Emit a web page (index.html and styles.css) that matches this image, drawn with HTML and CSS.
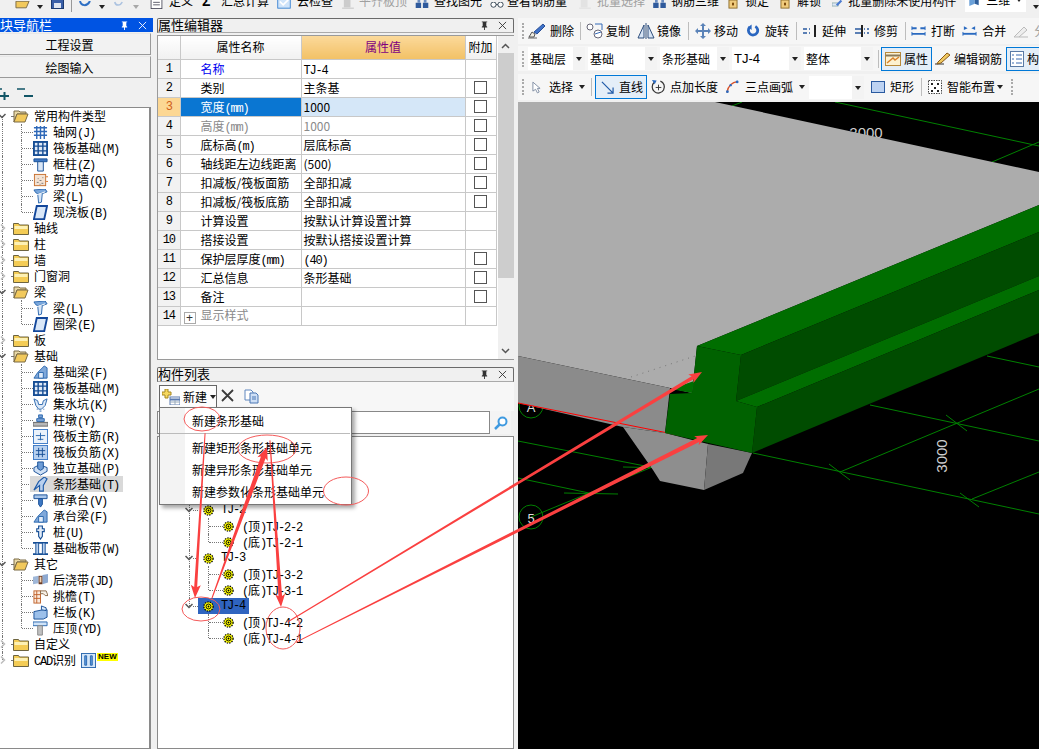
FILE: index.html
```html
<!DOCTYPE html>
<html lang="zh-CN">
<head>
<meta charset="utf-8">
<title>属性编辑器</title>
<link rel="stylesheet" href="styles.css">
</head>
<body>
<svg class="sprite" xmlns="http://www.w3.org/2000/svg">
<symbol id="folderopen" viewBox="0 0 16 14"><path d="M1 2h5l1 1h6v2H4L1 13z" fill="#e9d9a8" stroke="#7a6a45"/><path d="M1 13l3-8h11l-3 8z" fill="#f2c95c" stroke="#7a6a45"/></symbol>
<symbol id="folder" viewBox="0 0 16 14"><path d="M.5 2.500h5l1 1.500h9v9.500H.5z" fill="#f4cc55" stroke="#6d6440"/><path d="M1.500 5h13v3h-13z" fill="#fdf1b4"/></symbol>
<symbol id="grid" viewBox="0 0 16 16"><path d="M1 3h14M1 7h14M1 11h14M4 1v14M8 1v14M12 1v14" stroke="#2d68b8" stroke-width="1.500" fill="none"/></symbol>
<symbol id="raft" viewBox="0 0 16 16"><rect x="1" y="1" width="14" height="14" fill="#dfe9f7" stroke="#164d94" stroke-width="2"/><path d="M5.500 1v14M10.500 1v14M1 5.500h14M1 10.500h14" stroke="#164d94" stroke-width="1.500"/></symbol>
<symbol id="col" viewBox="0 0 16 16"><path d="M1 2h14v3H1z" fill="#3e78c4" stroke="#174f96"/><path d="M5 5h6v10H5z" fill="#d9e6f6" stroke="#174f96"/></symbol>
<symbol id="wall" viewBox="0 0 16 16"><rect x="1.500" y="1.500" width="12" height="12" fill="#f4e2d2" stroke="#c66f2e"/><path d="M4 10h2M7 8h2M9 11h2M5 6h1M10 5h1M7 12h1" stroke="#777"/><path d="M14 4h2M14 9h2" stroke="#d86b1f"/></symbol>
<symbol id="beam" viewBox="0 0 16 16"><path d="M1 1l12-1 2 3-8 3-4-2z" fill="#79a7dc" stroke="#2a66ae"/><path d="M5 5l5-1-1 10-3 1z" fill="#d8e6f7" stroke="#2a66ae"/><path d="M4 6l9-3" stroke="#fff"/></symbol>
<symbol id="slab" viewBox="0 0 16 16"><path d="M4 1h11l-3 14H1z" fill="#d9e7f8" stroke="#13479b" stroke-width="2"/></symbol>
<symbol id="fbeam" viewBox="0 0 16 16"><path d="M1 14l4-6 7-7 3 2v11z" fill="#7fa8da" stroke="#2a66ae"/><path d="M6 8h5v6H6z" fill="#e1ecf9" stroke="#2a66ae"/></symbol>
<symbol id="pit" viewBox="0 0 16 16"><path d="M1 2l4 2 1 4h4l1-4 4-2-2 7-4 4H6L3 9z" fill="#dce8f7" stroke="#2a66ae"/><path d="M4 13h1M7 15h2M11 13h1" stroke="#2a66ae"/></symbol>
<symbol id="pier" viewBox="0 0 16 16"><path d="M6 2h4v3H6zM4 6h8v3H4z" fill="#7ba3d8" stroke="#2a66ae"/><rect x="0" y="10" width="16" height="4" fill="#b8b8b8" stroke="#666"/></symbol>
<symbol id="rmain" viewBox="0 0 16 16"><rect x=".5" y=".5" width="15" height="15" fill="#eaf2fb" stroke="#3b79c6"/><path d="M3 7h10M8 4v8M5 11h6" stroke="#2a66ae" fill="none"/></symbol>
<symbol id="rneg" viewBox="0 0 16 16"><rect x=".5" y=".5" width="15" height="15" fill="#b7d0ef" stroke="#3b79c6"/><path d="M3 6h10M3 10h10M6 3v10M10 3v10" stroke="#174f96" fill="none"/></symbol>
<symbol id="iso" viewBox="0 0 16 16"><path d="M1 7l6-3 8 3v4l-7 4-7-4z" fill="#cfe0f5" stroke="#174f96"/><path d="M5 1h6v7l-3 2-3-2z" fill="#6d9cd6" stroke="#174f96"/></symbol>
<symbol id="strip" viewBox="0 0 16 16"><path d="M1 14l5-9 6-5 3 2-4 7v6H7V9z" fill="#b9d0ee" stroke="#1e5aa8" stroke-width="1.200"/></symbol>
<symbol id="cap" viewBox="0 0 16 16"><path d="M1 2h14v4H1z" fill="#a9c6ea" stroke="#174f96"/><path d="M6 6h4v6L8 15l-2-3z" fill="#3e78c4" stroke="#174f96"/></symbol>
<symbol id="pile" viewBox="0 0 16 16"><path d="M6 1h4v3h2v3h-2v5l-2 3-2-3V7H4V4h2z" fill="#e0ebf8" stroke="#174f96" stroke-width="1.200"/></symbol>
<symbol id="band" viewBox="0 0 16 16"><path d="M0 2h16M0 14h16" stroke="#174f96" stroke-width="2"/><path d="M3 2h3v12H3zM10 2h3v12h-3z" fill="#b7d0ef" stroke="#174f96"/></symbol>
<symbol id="post" viewBox="0 0 16 16"><path d="M0 4l6-1v8l-6 1z" fill="#9fb7d8"/><path d="M10 2l6-1v9l-6 2z" fill="#8ea9d0"/><path d="M6 3h4v9H6z" fill="#6b3a22"/><path d="M7 4h2v6H7z" fill="#f2d6b8"/></symbol>
<symbol id="eave" viewBox="0 0 16 16"><rect x="1" y="2" width="7" height="13" fill="#fbe9db" stroke="#c0622b"/><path d="M1 6h7M1 10h7M4 2v13" stroke="#c0622b"/><path d="M8 2l6 0 2 5-3 0-2-2H8z" fill="#f6f1e8" stroke="#8a6a4a"/></symbol>
<symbol id="rail" viewBox="0 0 16 16"><path d="M1 7l10-2h4v8l-4 2H1z" fill="#9cc0ea" stroke="#174f96"/><path d="M9 1l5 2v3l-5-1z" fill="#dceaf9" stroke="#174f96"/></symbol>
<symbol id="coping" viewBox="0 0 16 16"><path d="M0 1h15v4H0z" fill="#cfe3f8" stroke="#2a66ae"/><path d="M5 5h5v10H5z" fill="#c0c0c0" stroke="#888"/></symbol>
<symbol id="cad" viewBox="0 0 16 16"><rect x=".5" y=".5" width="15" height="15" fill="#d4e6f9" stroke="#2a66ae"/><path d="M4 3h2v10H4zM10 3h2v10h-2z" fill="#5d9ae0" stroke="#2a66ae"/></symbol>
<symbol id="gear" viewBox="0 0 12 12"><circle cx="6" cy="6" r="5" fill="#ff0" stroke="#000" stroke-width="1.400" stroke-dasharray="1.500 1.200"/><circle cx="6" cy="6" r="2.700" fill="#ff0" stroke="#000"/><circle cx="6" cy="6" r="1" fill="#000"/></symbol>
<symbol id="pin" viewBox="0 0 10 10"><path d="M2 .5h6v.8H7v4.200l1 1v.8H5.500V10h-1V7.300H2v-.8l1-1V1.300H2z" fill="currentColor"/></symbol>
<symbol id="x" viewBox="0 0 10 10"><path d="M1 1l8 8M9 1L1 9" stroke="currentColor" fill="none"/></symbol>
<symbol id="del" viewBox="0 0 18 16"><path d="M0 15h9" stroke="#666"/><path d="M1 14l3-5 3 2-1 3z" fill="#f0ede2" stroke="#555"/><path d="M6 9l9-8 2 2-8 8z" fill="#3f72c8" stroke="#2a4f96"/></symbol>
<symbol id="copy" viewBox="0 0 18 16"><circle cx="4" cy="4" r="3" fill="#fff" stroke="#667"/><circle cx="12" cy="11" r="4" fill="#fff" stroke="#667"/><path d="M9 11l6-2M9 1h7v6" stroke="#356ab8" fill="none"/></symbol>
<symbol id="mirror" viewBox="0 0 18 16"><path d="M7 2v13H1zM11 2v13h6z" fill="#d8e5f6" stroke="#2f4f7d"/><path d="M9 0v16" stroke="#2f4f7d"/></symbol>
<symbol id="move" viewBox="0 0 16 16"><path d="M8 0l3 3H9v4h4V5l3 3-3 3V9H9v4h2l-3 3-3-3h2V9H3v2L0 8l3-3v2h4V3H5z" fill="#5b83b8"/></symbol>
<symbol id="rotate" viewBox="0 0 14 14"><path d="M3 2.800A5 5 0 1 0 9 2" fill="none" stroke="#2a66c0" stroke-width="3"/><path d="M5 0v6L1 3z" fill="#2a66c0"/></symbol>
<symbol id="extend" viewBox="0 0 14 14"><path d="M0 5h4M0 9h4M6 5h1M6 9h1" stroke="#2a5aa0" stroke-width="1.500"/><path d="M12 1v12" stroke="#222" stroke-width="2"/></symbol>
<symbol id="trim" viewBox="0 0 14 14"><path d="M0 5h6M0 9h6M9 5h1M9 9h1M12 5h2M12 9h2" stroke="#2a5aa0" stroke-width="1.500"/><path d="M7 1v12" stroke="#222" stroke-width="2"/></symbol>
<symbol id="brk" viewBox="0 0 16 14"><path d="M1 4h5M10 4h5M1 10h14" stroke="#2a6ac0" stroke-width="2"/><path d="M1 2v4M15 2v4M1 8v4M15 8v4" stroke="#2a6ac0"/></symbol>
<symbol id="merge" viewBox="0 0 16 14"><path d="M2 2l4 2-4 2zM14 2l-4 2 4 2z" fill="#2a6ac0"/><path d="M1 10h14" stroke="#2a6ac0" stroke-width="2"/><path d="M1 8v4M15 8v4" stroke="#2a6ac0"/></symbol>
<symbol id="fen" viewBox="0 0 16 14"><path d="M1 13h14M1 13L11 3l3 3-8 7" fill="#eee" stroke="#bbb"/></symbol>
<symbol id="prop" viewBox="0 0 16 16"><rect x=".5" y="1.500" width="15" height="13" fill="#fdf1d0" stroke="#b98a3a"/><path d="M.5 4.500h15" stroke="#8a7a5a" stroke-width="2"/><path d="M2 12l6-5 2 2 4-3" stroke="#d9832b" stroke-width="1.500" fill="none"/></symbol>
<symbol id="edit" viewBox="0 0 16 14"><path d="M0 12h9" stroke="#333"/><path d="M3 10l9-9 3 2-9 8-4 1z" fill="#f0c860" stroke="#8a5a1a"/></symbol>
<symbol id="comp" viewBox="0 0 14 16"><rect x=".5" y=".5" width="13" height="15" fill="#fff" stroke="#5a7aa5"/><path d="M2 4h2M2 8h2M2 12h2M6 4h6M6 8h6M6 12h6" stroke="#3a6ab0"/></symbol>
<symbol id="cursor" viewBox="0 0 10 14"><path d="M1 1v10l3-2 2 4 2-1-2-4h3z" fill="#fff" stroke="#7c8aa0"/></symbol>
<symbol id="line" viewBox="0 0 14 14"><path d="M1 1l12 12M13 7v6H7" stroke="#1f5aa8" stroke-width="1.300" fill="none"/></symbol>
<symbol id="ptlen" viewBox="0 0 16 16"><path d="M3.500 3A6.500 6.500 0 1 0 10 1.800" fill="none" stroke="#333" stroke-width="1.300"/><path d="M5 8.500h6M8 5.500v6" stroke="#333"/><path d="M1 .5l5 .5-2 4z" fill="#2a6ac0"/></symbol>
<symbol id="arc" viewBox="0 0 14 14"><path d="M1 13C2 6 6 2 13 1" fill="none" stroke="#d9532b" stroke-width="1.500"/><circle cx="1.500" cy="12" r="1.500" fill="#2a6ac0"/><circle cx="12" cy="1.500" r="1.500" fill="#2a6ac0"/><circle cx="5" cy="5" r="1.300" fill="#2a6ac0"/></symbol>
<symbol id="rect" viewBox="0 0 14 12"><rect x=".5" y=".5" width="13" height="11" fill="#bcd2f2" stroke="#2a5aa0"/></symbol>
<symbol id="smart" viewBox="0 0 14 14"><rect x=".5" y=".5" width="13" height="13" fill="#fff" stroke="#444" stroke-dasharray="1.500 1"/><path d="M3 4h2M9 4h2M6 8h2M3 11h2M9 11h2" stroke="#222" stroke-width="2"/></symbol>
<symbol id="define" viewBox="0 0 14 12"><rect x=".5" y=".5" width="13" height="11" fill="#fff" stroke="#445"/><path d="M3 4h8M3 7h8" stroke="#445"/></symbol>
<symbol id="check" viewBox="0 0 16 12"><rect x=".5" y="-3" width="15" height="14" fill="#cfe4fa" stroke="#2a7ad0"/><path d="M3 3l4 4 6-6" stroke="#fff" stroke-width="2" fill="none"/></symbol>
<symbol id="align" viewBox="0 0 14 12"><rect x="2" y="0" width="8" height="10" fill="#ccc"/><path d="M0 11h14" stroke="#bbb"/></symbol>
<symbol id="find" viewBox="0 0 14 10"><path d="M0 3h6v6H0zM8 3h6v6H8z" fill="#2f5a9c"/><path d="M2 0h3v3H2zM9 0h3v3H9z" fill="#6a8cc0"/></symbol>
<symbol id="glass" viewBox="0 0 16 8"><circle cx="4" cy="3" r="3" fill="#fff" stroke="#234"/><circle cx="12" cy="3" r="3" fill="#fff" stroke="#234"/><path d="M7 3h2" stroke="#234"/></symbol>
<symbol id="lock" viewBox="0 0 10 10"><rect x=".5" y="0" width="9" height="9" fill="#f0cb7c" stroke="#8a6a2a"/><rect x="4" y="3" width="2" height="3" fill="#703d00"/></symbol>
<symbol id="bulk" viewBox="0 0 14 10"><path d="M0 7h8V3H0z" fill="#dfe8f7" stroke="#8aa"/><path d="M5 5l6-6 2 2-6 6z" fill="#4a7ad0"/></symbol>
<symbol id="cube" viewBox="0 0 12 14"><path d="M0 3l7-3v11l-7 3z" fill="#6aa0d8"/><path d="M7 0l5 2v11l-5-2z" fill="#2f5f9c"/></symbol>
<symbol id="floppy" viewBox="0 0 13 10"><rect x=".5" y="-3" width="12" height="12.500" fill="#3a5fa8" stroke="#1c3a70"/><rect x="3" y="4" width="7" height="5" fill="#dfe5f0"/></symbol>
<symbol id="ofolder" viewBox="0 0 16 8"><path d="M1 0h14l-3 7H1z" fill="#f2c95c" stroke="#7a6a45"/></symbol>
<symbol id="undo" viewBox="0 0 12 8"><path d="M1 0c1 5 7 6 10 0" fill="none" stroke="#2e6fc4" stroke-width="2"/></symbol>
<symbol id="newic" viewBox="0 0 18 16"><path d="M3 0h3v3h3v3H6v3H3V6H0V3h3z" fill="#f6d860" stroke="#a58620"/><rect x="8" y="8" width="10" height="8" fill="#fff" stroke="#5a7ab0"/><path d="M8 10.500h10" stroke="#5a7ab0" stroke-width="2"/><path d="M8 13h10M13 11v5" stroke="#9ab"/></symbol>
<symbol id="xlarge" viewBox="0 0 13 13"><path d="M1 1l11 11M12 1L1 12" stroke="#3c3c3c" stroke-width="1.800"/></symbol>
<symbol id="dup" viewBox="0 0 15 15"><path d="M1 1h6l2 2v8H1z" fill="#fff" stroke="#5f86be"/><path d="M6 4h6l2 2v8H6z" fill="#cfe0f6" stroke="#4a76b4"/><path d="M8 8h4M8 10h4" stroke="#4a76b4"/></symbol>
<symbol id="search" viewBox="0 0 14 14"><circle cx="8.500" cy="5.500" r="4" fill="#fff" stroke="#3f9ae0" stroke-width="2"/><path d="M5.500 8.500L1 13" stroke="#3f9ae0" stroke-width="2.500"/></symbol>
<symbol id="expandall" viewBox="0 0 14 12"><path d="M0 1h6" stroke="#156" stroke-width="1.500"/><path d="M4 8h9M8.500 4v8" stroke="#156" stroke-width="2"/></symbol>
<symbol id="collapseall" viewBox="0 0 16 12"><path d="M0 2h8" stroke="#156" stroke-width="1.500"/><path d="M7 9h9" stroke="#156" stroke-width="2"/></symbol>
<symbol id="chev" viewBox="0 0 8 6"><path d="M.5 1L4 4.500 7.500 1" fill="none" stroke="#555" stroke-width="1.500"/></symbol>
<symbol id="chevr" viewBox="0 0 6 8"><path d="M1 .5L4.500 4 1 7.500" fill="none" stroke="#bdbdbd" stroke-width="1.500"/></symbol>
</svg>

<div class="app">
  <header class="topbar">
    <svg class="m15" width="15" height="8"><use href="#ofolder"/></svg>
    <span class="drop m7"></span>
    <svg class="m8" width="13" height="10"><use href="#floppy"/></svg>
    <span class="vsep m7"></span>
    <svg class="m7" width="12" height="8"><use href="#undo"/></svg>
    <span class="drop m8"></span>
    <svg class="m9 faded" width="9" height="8"><use href="#undo"/></svg>
    <span class="drop m10 faded"></span>
    <svg class="m11" width="13" height="10"><use href="#define"/></svg>
    <span class="m6">定义</span>
    <span class="m9 sigma">Σ</span>
    <span class="m8">汇总计算</span>
    <svg class="m7" width="16" height="10"><use href="#check"/></svg>
    <span class="m5">云检查</span>
    <svg class="m8" width="14" height="10"><use href="#align"/></svg>
    <span class="m4 muted">平齐板顶</span>
    <svg class="m8" width="14" height="9"><use href="#find"/></svg>
    <span class="m5">查找图元</span>
    <svg class="m8" width="14" height="7"><use href="#glass"/></svg>
    <span class="m3">查看钢筋量</span>
    <svg class="m10 faded" width="16" height="10"><use href="#align"/></svg>
    <span class="m4 muted">批量选择</span>
    <svg class="m7" width="15" height="9"><use href="#find"/></svg>
    <span class="m4">钢筋三维</span>
    <svg class="m9" width="10" height="9"><use href="#lock"/></svg>
    <span class="m7">锁定</span>
    <svg class="m11" width="10" height="9"><use href="#lock"/></svg>
    <span class="m7">解锁</span>
    <svg class="m11" width="11" height="9"><use href="#bulk"/></svg>
    <span class="m5">批量删除未使用构件</span>
    <span class="viewbox m9"><svg width="12" height="11"><use href="#cube"/></svg><span>三维</span><span class="drop"></span></span>
    <span class="drop m7"></span>
  </header>

  <div class="main">
    <aside class="left">
      <div class="navtitle">
        <span class="navname">块导航栏</span>
        <svg class="pin" width="9" height="9"><use href="#pin"/></svg>
        <svg class="close" width="9" height="9"><use href="#x"/></svg>
      </div>
      <div class="navbtn">工程设置</div>
      <div class="navbtn">绘图输入</div>
      <div class="navtools">
        <svg class="tool-a" width="14" height="12"><use href="#expandall"/></svg>
        <svg class="tool-b" width="16" height="12"><use href="#collapseall"/></svg>
      </div>
      <div class="navtree">
        <div class="row"><span class="vl start"></span><svg class="chv" width="8" height="6"><use href="#chev"/></svg><span class="hl"></span><svg width="16" height="14"><use href="#folderopen"/></svg><span class="tx top">常用构件类型</span></div>
        <div class="row"><span class="vl"></span><span class="vl sub"></span><span class="hl s"></span><svg width="15" height="15"><use href="#grid"/></svg><span class="tx">轴网<i>(J)</i></span></div>
        <div class="row"><span class="vl"></span><span class="vl sub"></span><span class="hl s"></span><svg width="15" height="15"><use href="#raft"/></svg><span class="tx">筏板基础<i>(M)</i></span></div>
        <div class="row"><span class="vl"></span><span class="vl sub"></span><span class="hl s"></span><svg width="15" height="15"><use href="#col"/></svg><span class="tx">框柱<i>(Z)</i></span></div>
        <div class="row"><span class="vl"></span><span class="vl sub"></span><span class="hl s"></span><svg width="15" height="15"><use href="#wall"/></svg><span class="tx">剪力墙<i>(Q)</i></span></div>
        <div class="row"><span class="vl"></span><span class="vl sub"></span><span class="hl s"></span><svg width="15" height="15"><use href="#beam"/></svg><span class="tx">梁<i>(L)</i></span></div>
        <div class="row"><span class="vl"></span><span class="vl sub end"></span><span class="hl s"></span><svg width="15" height="15"><use href="#slab"/></svg><span class="tx">现浇板<i>(B)</i></span></div>
        <div class="row"><span class="vl"></span><svg class="chv r" width="6" height="8"><use href="#chevr"/></svg><span class="hl"></span><svg width="16" height="14"><use href="#folder"/></svg><span class="tx top">轴线</span></div>
        <div class="row"><span class="vl"></span><svg class="chv r" width="6" height="8"><use href="#chevr"/></svg><span class="hl"></span><svg width="16" height="14"><use href="#folder"/></svg><span class="tx top">柱</span></div>
        <div class="row"><span class="vl"></span><svg class="chv r" width="6" height="8"><use href="#chevr"/></svg><span class="hl"></span><svg width="16" height="14"><use href="#folder"/></svg><span class="tx top">墙</span></div>
        <div class="row"><span class="vl"></span><svg class="chv r" width="6" height="8"><use href="#chevr"/></svg><span class="hl"></span><svg width="16" height="14"><use href="#folder"/></svg><span class="tx top">门窗洞</span></div>
        <div class="row"><span class="vl"></span><svg class="chv" width="8" height="6"><use href="#chev"/></svg><span class="hl"></span><svg width="16" height="14"><use href="#folderopen"/></svg><span class="tx top">梁</span></div>
        <div class="row"><span class="vl"></span><span class="vl sub"></span><span class="hl s"></span><svg width="15" height="15"><use href="#beam"/></svg><span class="tx">梁<i>(L)</i></span></div>
        <div class="row"><span class="vl"></span><span class="vl sub end"></span><span class="hl s"></span><svg width="15" height="15"><use href="#slab"/></svg><span class="tx">圈梁<i>(E)</i></span></div>
        <div class="row"><span class="vl"></span><svg class="chv r" width="6" height="8"><use href="#chevr"/></svg><span class="hl"></span><svg width="16" height="14"><use href="#folder"/></svg><span class="tx top">板</span></div>
        <div class="row"><span class="vl"></span><svg class="chv" width="8" height="6"><use href="#chev"/></svg><span class="hl"></span><svg width="16" height="14"><use href="#folderopen"/></svg><span class="tx top">基础</span></div>
        <div class="row"><span class="vl"></span><span class="vl sub"></span><span class="hl s"></span><svg width="15" height="15"><use href="#fbeam"/></svg><span class="tx">基础梁<i>(F)</i></span></div>
        <div class="row"><span class="vl"></span><span class="vl sub"></span><span class="hl s"></span><svg width="15" height="15"><use href="#raft"/></svg><span class="tx">筏板基础<i>(M)</i></span></div>
        <div class="row"><span class="vl"></span><span class="vl sub"></span><span class="hl s"></span><svg width="15" height="15"><use href="#pit"/></svg><span class="tx">集水坑<i>(K)</i></span></div>
        <div class="row"><span class="vl"></span><span class="vl sub"></span><span class="hl s"></span><svg width="15" height="15"><use href="#pier"/></svg><span class="tx">柱墩<i>(Y)</i></span></div>
        <div class="row"><span class="vl"></span><span class="vl sub"></span><span class="hl s"></span><svg width="15" height="15"><use href="#rmain"/></svg><span class="tx">筏板主筋<i>(R)</i></span></div>
        <div class="row"><span class="vl"></span><span class="vl sub"></span><span class="hl s"></span><svg width="15" height="15"><use href="#rneg"/></svg><span class="tx">筏板负筋<i>(X)</i></span></div>
        <div class="row"><span class="vl"></span><span class="vl sub"></span><span class="hl s"></span><svg width="15" height="15"><use href="#iso"/></svg><span class="tx">独立基础<i>(P)</i></span></div>
        <div class="row current"><span class="vl"></span><span class="vl sub"></span><span class="hl s"></span><span class="pick"><svg width="15" height="15"><use href="#strip"/></svg><span class="tx">条形基础<i>(T)</i></span></span></div>
        <div class="row"><span class="vl"></span><span class="vl sub"></span><span class="hl s"></span><svg width="15" height="15"><use href="#cap"/></svg><span class="tx">桩承台<i>(V)</i></span></div>
        <div class="row"><span class="vl"></span><span class="vl sub"></span><span class="hl s"></span><svg width="15" height="15"><use href="#fbeam"/></svg><span class="tx">承台梁<i>(F)</i></span></div>
        <div class="row"><span class="vl"></span><span class="vl sub"></span><span class="hl s"></span><svg width="15" height="15"><use href="#pile"/></svg><span class="tx">桩<i>(U)</i></span></div>
        <div class="row"><span class="vl"></span><span class="vl sub end"></span><span class="hl s"></span><svg width="15" height="15"><use href="#band"/></svg><span class="tx">基础板带<i>(W)</i></span></div>
        <div class="row"><span class="vl"></span><svg class="chv" width="8" height="6"><use href="#chev"/></svg><span class="hl"></span><svg width="16" height="14"><use href="#folderopen"/></svg><span class="tx top">其它</span></div>
        <div class="row"><span class="vl"></span><span class="vl sub"></span><span class="hl s"></span><svg width="15" height="15"><use href="#post"/></svg><span class="tx">后浇带<i>(JD)</i></span></div>
        <div class="row"><span class="vl"></span><span class="vl sub"></span><span class="hl s"></span><svg width="15" height="15"><use href="#eave"/></svg><span class="tx">挑檐<i>(T)</i></span></div>
        <div class="row"><span class="vl"></span><span class="vl sub"></span><span class="hl s"></span><svg width="15" height="15"><use href="#rail"/></svg><span class="tx">栏板<i>(K)</i></span></div>
        <div class="row"><span class="vl"></span><span class="vl sub end"></span><span class="hl s"></span><svg width="15" height="15"><use href="#coping"/></svg><span class="tx">压顶<i>(YD)</i></span></div>
        <div class="row"><span class="vl"></span><svg class="chv r" width="6" height="8"><use href="#chevr"/></svg><span class="hl"></span><svg width="16" height="14"><use href="#folder"/></svg><span class="tx top">自定义</span></div>
        <div class="row"><span class="vl end"></span><svg class="chv r" width="6" height="8"><use href="#chevr"/></svg><span class="hl"></span><svg width="16" height="14"><use href="#folder"/></svg><span class="tx top"><i>CAD</i>识别</span><svg class="cadic" width="15" height="15"><use href="#cad"/></svg><span class="badge">NEW</span></div>
      </div>
    </aside>

    <section class="mid">
      <div class="ptitle"><span class="pname">属性编辑器</span><svg class="pin" width="9" height="9"><use href="#pin"/></svg><svg class="close" width="9" height="9"><use href="#x"/></svg></div>
      <div class="props">
        <table class="grid">
          <colgroup><col class="c0"><col class="c1"><col class="c2"><col class="c3"></colgroup>
          <thead>
            <tr><th class="hn"></th><th class="hn">属性名称</th><th class="hv">属性值</th><th class="hn">附加</th></tr>
          </thead>
          <tbody>
            <tr><td class="no">1</td><td class="nm blue">名称</td><td class="val"><i>TJ-4</i></td><td></td></tr>
            <tr><td class="no">2</td><td class="nm">类别</td><td class="val">主条基</td><td><b class="box"></b></td></tr>
            <tr class="sel"><td class="no">3</td><td class="nm">宽度<i>(mm)</i></td><td class="val">1000</td><td><b class="box"></b></td></tr>
            <tr class="dim"><td class="no">4</td><td class="nm">高度<i>(mm)</i></td><td class="val">1000</td><td><b class="box"></b></td></tr>
            <tr><td class="no">5</td><td class="nm">底标高<i>(m)</i></td><td class="val">层底标高</td><td><b class="box"></b></td></tr>
            <tr><td class="no">6</td><td class="nm">轴线距左边线距离</td><td class="val">(500)</td><td><b class="box"></b></td></tr>
            <tr><td class="no">7</td><td class="nm">扣减板/筏板面筋</td><td class="val">全部扣减</td><td><b class="box"></b></td></tr>
            <tr><td class="no">8</td><td class="nm">扣减板/筏板底筋</td><td class="val">全部扣减</td><td><b class="box"></b></td></tr>
            <tr><td class="no">9</td><td class="nm">计算设置</td><td class="val">按默认计算设置计算</td><td></td></tr>
            <tr><td class="no">10</td><td class="nm">搭接设置</td><td class="val">按默认搭接设置计算</td><td></td></tr>
            <tr><td class="no">11</td><td class="nm">保护层厚度<i>(mm)</i></td><td class="val"><i>(40)</i></td><td><b class="box"></b></td></tr>
            <tr><td class="no">12</td><td class="nm">汇总信息</td><td class="val">条形基础</td><td><b class="box"></b></td></tr>
            <tr><td class="no">13</td><td class="nm">备注</td><td class="val"></td><td><b class="box"></b></td></tr>
            <tr class="dim"><td class="no">14</td><td class="nm expand"><b class="plus">+</b>显示样式</td><td class="val"></td><td></td></tr>
          </tbody>
        </table>
        <div class="scroll">
          <svg class="sup" width="9" height="6"><use href="#chev"/></svg>
          <div class="thumb"></div>
          <svg class="sdn" width="9" height="6"><use href="#chev"/></svg>
        </div>
      </div>

      <div class="ptitle second"><span class="pname">构件列表</span><svg class="pin" width="9" height="9"><use href="#pin"/></svg><svg class="close" width="9" height="9"><use href="#x"/></svg></div>
      <div class="listbar">
        <div class="newbtn"><svg width="18" height="16"><use href="#newic"/></svg><span>新建</span><span class="drop"></span></div>
        <svg class="m4 lb-ic" width="13" height="13"><use href="#xlarge"/></svg>
        <svg class="m10 lb-ic" width="15" height="15"><use href="#dup"/></svg>
      </div>
      <div class="searchrow">
        <div class="searchbox"></div>
        <div class="searchbtn"><svg width="14" height="14"><use href="#search"/></svg></div>
      </div>
      <div class="listtree">
        <div class="lrow"><span class="vl o"></span><svg class="chv2" width="8" height="6"><use href="#chev"/></svg><span class="hl h5"></span><span class="tj"><svg width="11" height="11"><use href="#gear"/></svg><i>TJ-2</i></span></div>
        <div class="lrow"><span class="vl o"></span><span class="vl lsub"></span><span class="hl h14"></span><svg width="11" height="11"><use href="#gear"/></svg><span class="lt"><i>(</i>顶<i>)TJ-2-2</i></span></div>
        <div class="lrow"><span class="vl o"></span><span class="vl lsub end"></span><span class="hl h14"></span><svg width="11" height="11"><use href="#gear"/></svg><span class="lt"><i>(</i>底<i>)TJ-2-1</i></span></div>
        <div class="lrow"><span class="vl o"></span><svg class="chv2" width="8" height="6"><use href="#chev"/></svg><span class="hl h5"></span><span class="tj"><svg width="11" height="11"><use href="#gear"/></svg><i>TJ-3</i></span></div>
        <div class="lrow"><span class="vl o"></span><span class="vl lsub"></span><span class="hl h14"></span><svg width="11" height="11"><use href="#gear"/></svg><span class="lt"><i>(</i>顶<i>)TJ-3-2</i></span></div>
        <div class="lrow"><span class="vl o"></span><span class="vl lsub end"></span><span class="hl h14"></span><svg width="11" height="11"><use href="#gear"/></svg><span class="lt"><i>(</i>底<i>)TJ-3-1</i></span></div>
        <div class="lrow"><span class="vl o end"></span><svg class="chv2" width="8" height="6"><use href="#chev"/></svg><span class="hl h5"></span><span class="tj on"><svg width="11" height="11"><use href="#gear"/></svg><i>TJ-4</i></span></div>
        <div class="lrow"><span class="vl o none"></span><span class="vl lsub"></span><span class="hl h14"></span><svg width="11" height="11"><use href="#gear"/></svg><span class="lt"><i>(</i>顶<i>)TJ-4-2</i></span></div>
        <div class="lrow"><span class="vl o none"></span><span class="vl lsub end"></span><span class="hl h14"></span><svg width="11" height="11"><use href="#gear"/></svg><span class="lt"><i>(</i>底<i>)TJ-4-1</i></span></div>
      </div>
      <div class="menu">
        <div class="mi first">新建条形基础</div>
        <div class="msep"></div>
        <div class="mi">新建矩形条形基础单元</div>
        <div class="mi">新建异形条形基础单元</div>
        <div class="mi">新建参数化条形基础单元</div>
      </div>
    </section>

    <section class="right">
      <div class="tbar t1">
        <span class="grip"></span>
        <svg class="m4" width="18" height="16"><use href="#del"/></svg><span class="m4">删除</span>
        <span class="vsep m6"></span>
        <svg class="m5" width="18" height="16"><use href="#copy"/></svg><span class="m2">复制</span>
        <svg class="m7" width="18" height="16"><use href="#mirror"/></svg><span class="m2">镜像</span>
        <span class="vsep m7"></span>
        <svg class="m6" width="16" height="16"><use href="#move"/></svg><span class="m3">移动</span>
        <svg class="m9" width="13" height="14"><use href="#rotate"/></svg><span class="m5">旋转</span>
        <span class="vsep m7"></span>
        <svg class="m6" width="14" height="14"><use href="#extend"/></svg><span class="m5">延伸</span>
        <svg class="m9" width="14" height="14"><use href="#trim"/></svg><span class="m5">修剪</span>
        <span class="vsep m7"></span>
        <svg class="m5" width="15" height="14"><use href="#brk"/></svg><span class="m5">打断</span>
        <svg class="m7" width="15" height="14"><use href="#merge"/></svg><span class="m5">合并</span>
        <svg class="m7" width="16" height="14"><use href="#fen"/></svg><span class="m5 muted">分</span>
      </div>
      <div class="tbar t2">
        <span class="grip"></span>
        <span class="sel-a m4">基础层<span class="sel-arrow"></span></span>
        <span class="sel-b m3">基础<span class="sel-arrow"></span></span>
        <span class="sel-b m3">条形基础<span class="sel-arrow"></span></span>
        <span class="sel-b m3 latin">TJ-4<span class="sel-arrow"></span></span>
        <span class="sel-b m3">整体<span class="sel-arrow"></span></span>
        <span class="vsep m5"></span>
        <span class="tog m2"><svg width="16" height="16"><use href="#prop"/></svg>属性</span>
        <svg class="m3" width="16" height="14"><use href="#edit"/></svg><span class="m3">编辑钢筋</span>
        <span class="tog m4"><svg width="14" height="16"><use href="#comp"/></svg>构件列表</span>
      </div>
      <div class="tbar t3">
        <span class="grip"></span>
        <svg class="m8" width="9" height="13"><use href="#cursor"/></svg><span class="m8">选择</span><span class="drop m6"></span>
        <span class="vsep m6"></span>
        <span class="tog m3 line"><svg width="13" height="13"><use href="#line"/></svg>直线</span>
        <svg class="m4" width="15" height="16"><use href="#ptlen"/></svg><span class="m4">点加长度</span>
        <svg class="m8" width="13" height="14"><use href="#arc"/></svg><span class="m6">三点画弧</span><span class="drop m6"></span>
        <span class="sel-c m4"><span class="sel-arrow"></span></span>
        <svg class="m7" width="14" height="12"><use href="#rect"/></svg><span class="m5">矩形</span>
        <span class="vsep m7"></span>
        <svg class="m6" width="14" height="14"><use href="#smart"/></svg><span class="m5">智能布置</span><span class="drop m2"></span>
        <span class="grip m8"></span>
      </div>
      <div class="canvas">
        <svg class="scene" width="521" height="647" viewBox="518 102 521 647">
          <rect x="518" y="102" width="521" height="647" fill="#000"/>
          <text class="dim3" x="866" y="138" text-anchor="middle">2000</text>
          <text class="dim3" transform="translate(947 456) rotate(-90)" text-anchor="middle">3000</text>
          <g class="axis">
            <path d="M835 102L1039 146M992 162L1039 142M732 106L742 102"/>
            <path d="M753 453L1039 514M870 405L1039 441M987 356L1039 367"/>
            <path d="M840 472L1039 389M972 499L1039 472"/>
            <path d="M829 464L850 480M946 415L967 431M960 493L979 507"/>
            <path d="M518 441L650 467M518 478L589 493M623 467L677 468M564 493L618 494M531 517L708 444"/>
            <circle cx="531" cy="406" r="12"/>
            <circle cx="531" cy="517" r="12"/>
          </g>
          <text class="axl" x="531" y="412" text-anchor="middle">A</text>
          <text class="axl" x="531" y="523" text-anchor="middle">5</text>
          <polygon fill="#acacac" points="518,102 715,102 1039,172 1039,205 697,346 692,393 670,388 518,356"/>
          <polygon fill="#8b8b8b" points="518,356 670,388 665,433 623,427 518,403"/>
          <path d="M518 403L698 439" stroke="#f00" fill="none"/>
          <polygon fill="#8e8e8e" points="623,427 653,470 660,481 704,490 708,444 665,433"/>
          <polygon fill="#787878" points="708,444 704,490 743,473 752,453"/>
          <path d="M631 377L695 356" stroke="#777" stroke-dasharray="1 5" fill="none"/>
          <polygon fill="#006e00" points="697,346 1039,205 1039,232 741,355"/>
          <polygon fill="#004c00" points="741,355 1039,232 1039,276 736,401"/>
          <polygon fill="#006e00" points="736,401 1039,276 1039,290 757,407"/>
          <polygon fill="#004c00" points="757,407 1039,290 1039,333 752,453"/>
          <polygon fill="#006200" points="697,346 741,355 736,401 757,407 752,453 665,433 670,394 692,393"/>
          <polygon fill="#006e00" points="671,389 692,393 694,381"/>
        </svg>
      </div>
    </section>
  </div>

  <svg class="marks" width="1039" height="749" viewBox="0 0 1039 749">
    <g class="circ">
      <ellipse cx="202" cy="419" rx="18" ry="12"/>
      <ellipse cx="267" cy="449" rx="29" ry="14"/>
      <ellipse cx="346" cy="491" rx="22.500" ry="14"/>
      <ellipse cx="201" cy="609" rx="19" ry="12"/>
      <ellipse cx="283" cy="628" rx="17" ry="21"/>
    </g>
    <g class="arrows">
      <polygon transform="translate(195 598) rotate(93.500)" points="-165,-.5 -11,-1.500 -13,-5 0,0 -13,5 -11,1.500 -165,.5"/>
      <polygon transform="translate(267 447) rotate(-70)" points="-161,-.5 -11,-2.500 -13,-5.500 0,0 -13,5.500 -11,2.500 -161,.5"/>
      <polygon transform="translate(281 607) rotate(86.200)" points="-167,-.5 -11,-1.800 -13,-5 0,0 -13,5 -11,1.800 -167,.5"/>
      <polygon transform="translate(702 372) rotate(-31.100)" points="-484,-.5 -11,-1.800 -13,-5 0,0 -13,5 -11,1.800 -484,.5"/>
      <polygon transform="translate(708 435) rotate(-26.700)" points="-461,-.5 -11,-2.200 -13,-5 0,0 -13,5 -11,2.200 -461,.5"/>
    </g>
  </svg>
</div>
</body>
</html>
```

FILE: styles.css
```css
* { box-sizing: border-box; }
html, body { margin: 0; padding: 0; }
body {
  width: 1039px;
  height: 749px;
  overflow: hidden;
  background: #f0f0f0;
  font: 12px/16px "Noto Sans CJK SC", "Liberation Sans", sans-serif;
  color: #000;
}
svg { display: block; flex: none; }
i, em { font-style: normal; }
i { font: 12px/1 "Liberation Mono", monospace; letter-spacing: -1.2px; }
.sprite { display: none; }
.app { position: relative; width: 1039px; height: 749px; overflow: hidden; display: flex; flex-direction: column; }
.m2 { margin-left: 2px; } .m3 { margin-left: 3px; } .m4 { margin-left: 4px; } .m5 { margin-left: 5px; }
.m6 { margin-left: 6px; } .m7 { margin-left: 7px; } .m8 { margin-left: 8px; } .m9 { margin-left: 9px; }
.m10 { margin-left: 10px; } .m11 { margin-left: 11px; } .m15 { margin-left: 15px; }
.muted { color: #a0a0a0; }
.faded { opacity: .35; }
.drop { display: block; flex: none; width: 0; height: 0; border: 3.500px solid transparent; border-top: 4px solid #222; border-bottom: 0; }
.vsep { display: block; flex: none; width: 1px; height: 22px; background: #bdbdbd; }

.topbar { flex: none; height: 12px; display: flex; align-items: flex-end; overflow: hidden; padding-bottom: 3px; white-space: nowrap; }
.topbar > span:not(.drop):not(.vsep) { line-height: 16px; height: 16px; }
.topbar .vsep { height: 20px; margin-bottom: -3px; background: #999; }
.topbar .sigma { font: bold 14px/16px "Liberation Sans", sans-serif; width: 11px; }
.viewbox { display: flex; align-items: center; gap: 6px; width: 61px; height: 24px !important; padding-left: 3px; background: #fff; margin-bottom: -3px; }

.main { flex: 1; min-height: 0; display: flex; }
.left { flex: none; width: 153px; padding-top: 6px; display: flex; flex-direction: column; }
.navtitle { flex: none; height: 14px; background: #0054e3; color: #fff; display: flex; align-items: center; font-size: 13px; }
.navname { flex: 1; }
.pin { margin-right: 9px; color: #fff; }
.close { margin-right: 6px; color: #fff; }
.navbtn { flex: none; width: 151px; height: 22px; margin-top: 1px; padding-right: 11px; border: 1px solid #9a9a9a; border-left: 0; border-top-color: #e8e8e8; background: #f2f2f2; text-align: center; line-height: 21px; }
.navtools { flex: none; height: 29px; display: flex; align-items: center; }
.tool-a { margin-left: -4px; margin-top: 2px; }
.tool-b { margin-left: 7px; margin-top: 1px; }
.navtree { flex: 1; width: 151px; background: #fff; border: 1px solid #8a8a8a; border-left: 0; border-right: 2px solid #8a8a8a; margin-right: 2px; overflow: hidden; }

.row { height: 16px; display: flex; align-items: center; }
.vl { flex: none; display: block; align-self: stretch; width: 1px; margin-left: 2px; border-left: 1px dotted #777; }
.vl.sub { margin-left: 18px; }
.vl.end { align-self: flex-start; height: 8px; }
.vl.start { align-self: flex-end; height: 8px; }
.chv { margin-left: -5px; }
.chv.r { margin-left: -3px; }
.hl { flex: none; display: block; width: 2px; margin-left: 5px; border-top: 1px dotted #777; }
.chv.r + .hl { margin-left: 5px; }
.hl.s { width: 11px; margin-left: 0; }
.tx { margin-left: 5px; white-space: nowrap; }
.pick { display: flex; align-items: center; padding: 0 2px 0 3px; margin-left: -3px; width: 93px; height: 16px; background: #d9d9d9; }
.cadic { margin-left: 5px; }
.badge { display: block; margin: -7px 0 0 1px; font: bold 8px/8px "Liberation Sans", sans-serif; background: #ff0; padding: 0 1px; }

.mid { position: relative; flex: none; width: 365px; padding: 6px 4px 0 4px; display: flex; flex-direction: column; }
.ptitle { flex: none; height: 15px; display: flex; align-items: center; border: 1px solid #6a6a6a; border-bottom-color: #aaa; border-radius: 2px 2px 0 0; background: #f0f0f0; font-size: 13px; line-height: 13px; }
.ptitle .pin, .ptitle .close { color: #333; }
.pname { flex: 1; margin-top: -2px; }
.props { flex: none; height: 325px; margin-top: 2px; display: flex; background: #fff; border: 1px solid #9a9a9a; }
.grid { flex: none; width: 338px; height: 289px; table-layout: fixed; border-collapse: collapse; }
.c0 { width: 22px; } .c1 { width: 121px; } .c2 { width: 164px; } .c3 { width: 31px; }
.grid th, .grid td { border: 1px solid #c8c8c8; padding: 0; font-weight: 400; height: 19px; line-height: 16px; white-space: nowrap; }
.grid th { height: 23px; border-top: 0; background: linear-gradient(#fff, #f1f1f1); }
.grid th:first-child, .grid td:first-child { border-left: 0; }
.grid .hv { background: linear-gradient(#fbd99a, #f2c166); color: #800080; }
.grid .no { text-align: center; background: #f2f2f2; font: 12px/16px "Liberation Mono", monospace; letter-spacing: -1.2px; }
.grid .nm { padding-left: 20px; }
.grid .val { padding-left: 2px; }
.grid .blue { color: #0000f0; }
.grid .sel .no { background: #fcd793; color: #d0601a; }
.grid .sel .nm { background: #0a76d2; color: #fff; }
.grid .sel .val { background: #d5e7f8; }
.grid .dim .nm, .grid .dim .val { color: #8a8a8a; }
.grid .expand { padding-left: 3px; }
.plus { display: inline-block; width: 12px; height: 12px; margin-right: 5px; border: 1px solid #aaa; color: #333; font: 12px/10px "Liberation Sans", sans-serif; text-align: center; vertical-align: -2px; }
.box { display: block; width: 13px; height: 13px; margin: 0 auto; border: 1px solid #555; background: #fff; }
.scroll { flex: none; width: 16px; margin-left: 1px; background: #f0f0f0; display: flex; flex-direction: column; align-items: center; }
.sup { margin-top: 7px; transform: scaleY(-1); }
.thumb { width: 16px; height: 225px; margin-top: 4px; background: #cdcdcd; }
.sdn { margin-top: 70px; }
.second { margin-top: 7px; }
.listbar { flex: none; height: 29px; display: flex; align-items: flex-start; padding: 3px 0 0 2px; background: #f7f7f7; }
.lb-ic { margin-top: 4px; }
.newbtn { width: 58px; height: 23px; display: flex; align-items: center; gap: 3px; border: 1px solid #666; background: #fdfdfd; padding-left: 2px; }
.searchrow { flex: none; height: 25px; display: flex; align-items: flex-start; }
.searchbox { width: 333px; height: 23px; background: #fff; border: 1px solid #888; }
.searchbtn { width: 21px; height: 23px; display: flex; align-items: center; justify-content: center; background: #f4f4f4; }
.listtree { flex: 1; background: #fff; border: 1px solid #8a8a8a; padding-top: 65px; overflow: hidden; }
.lrow { height: 16px; display: flex; align-items: center; }
.vl.o { margin-left: 31px; }
.vl.none { border-color: transparent; }
.vl.lsub { margin-left: 18px; }
.chv2 { margin-left: -5px; }
.hl.h5 { width: 5px; margin-left: 0; }
.hl.h14 { width: 14px; margin-left: 0; }
.tj { display: flex; align-items: center; gap: 7px; height: 16px; padding: 0 4px 0 5px; }
.tj.on { background: #2f64bf; }
.lt { margin-left: 8px; white-space: nowrap; }

.menu { position: absolute; left: 6px; top: 395px; width: 193px; height: 98px; padding: 1px 1px 0 26px; background: linear-gradient(90deg, #f3f3f3 25px, #fff 25px); border: 1px solid #777; box-shadow: 3px 3px 4px rgba(0,0,0,.35); }
.mi { height: 22px; padding-left: 6px; line-height: 22px; white-space: nowrap; }
.mi.first { height: 24px; line-height: 23px; }
.msep { height: 1px; margin: 0 0 3px -26px; background: #bbb; }

.right { flex: 1; min-width: 0; padding-top: 6px; display: flex; flex-direction: column; }
.tbar { flex: none; display: flex; align-items: center; white-space: nowrap; overflow: hidden; background: #f6f6f6; }
.tbar .vsep { height: 18px; }
.t1 { height: 26px; padding-left: 4px; }
.t2 { height: 25px; margin-top: 2px; padding-left: 4px; }
.t3 { height: 26px; margin-top: 3px; padding-left: 4px; }
.grip { display: block; flex: none; width: 2px; height: 16px; border-left: 2px dotted #aaa; }
.sel-a, .sel-b, .sel-c { position: relative; display: flex; align-items: center; flex: none; height: 23px; background: #fff; padding-left: 2px; }
.sel-a { width: 57px; }
.sel-b { width: 69px; }
.sel-c { width: 55px; }
.latin { font-family: "Liberation Sans", sans-serif; font-size: 13px; }
.sel-arrow { position: absolute; right: 0; top: 0; width: 12px; height: 23px; background: #f3f3f3; }
.sel-arrow::after { content: ""; position: absolute; left: 3px; top: 10px; border: 3.500px solid transparent; border-top: 4px solid #222; border-bottom: 0; }
.tog { display: flex; align-items: center; flex: none; gap: 3px; height: 24px; padding: 0 3px; border: 1px solid #0078d7; background: #e4eef8; }
.tog.line { gap: 5px; padding: 0 3px 0 5px; }
.canvas { flex: 1; min-height: 0; margin-top: 2px; overflow: hidden; }
.scene { display: block; }
.axis { fill: none; stroke: #008000; stroke-width: 1; }
.dim3 { fill: #cfcfcf; font: 15px "Liberation Sans", sans-serif; }
.axl { fill: #ddd; font: 13px "Liberation Sans", sans-serif; }

.marks { position: absolute; left: 0; top: 0; pointer-events: none; }
.circ { fill: none; stroke: #f45a5a; stroke-width: 1; }
.arrows { fill: #fa4040; }
```
